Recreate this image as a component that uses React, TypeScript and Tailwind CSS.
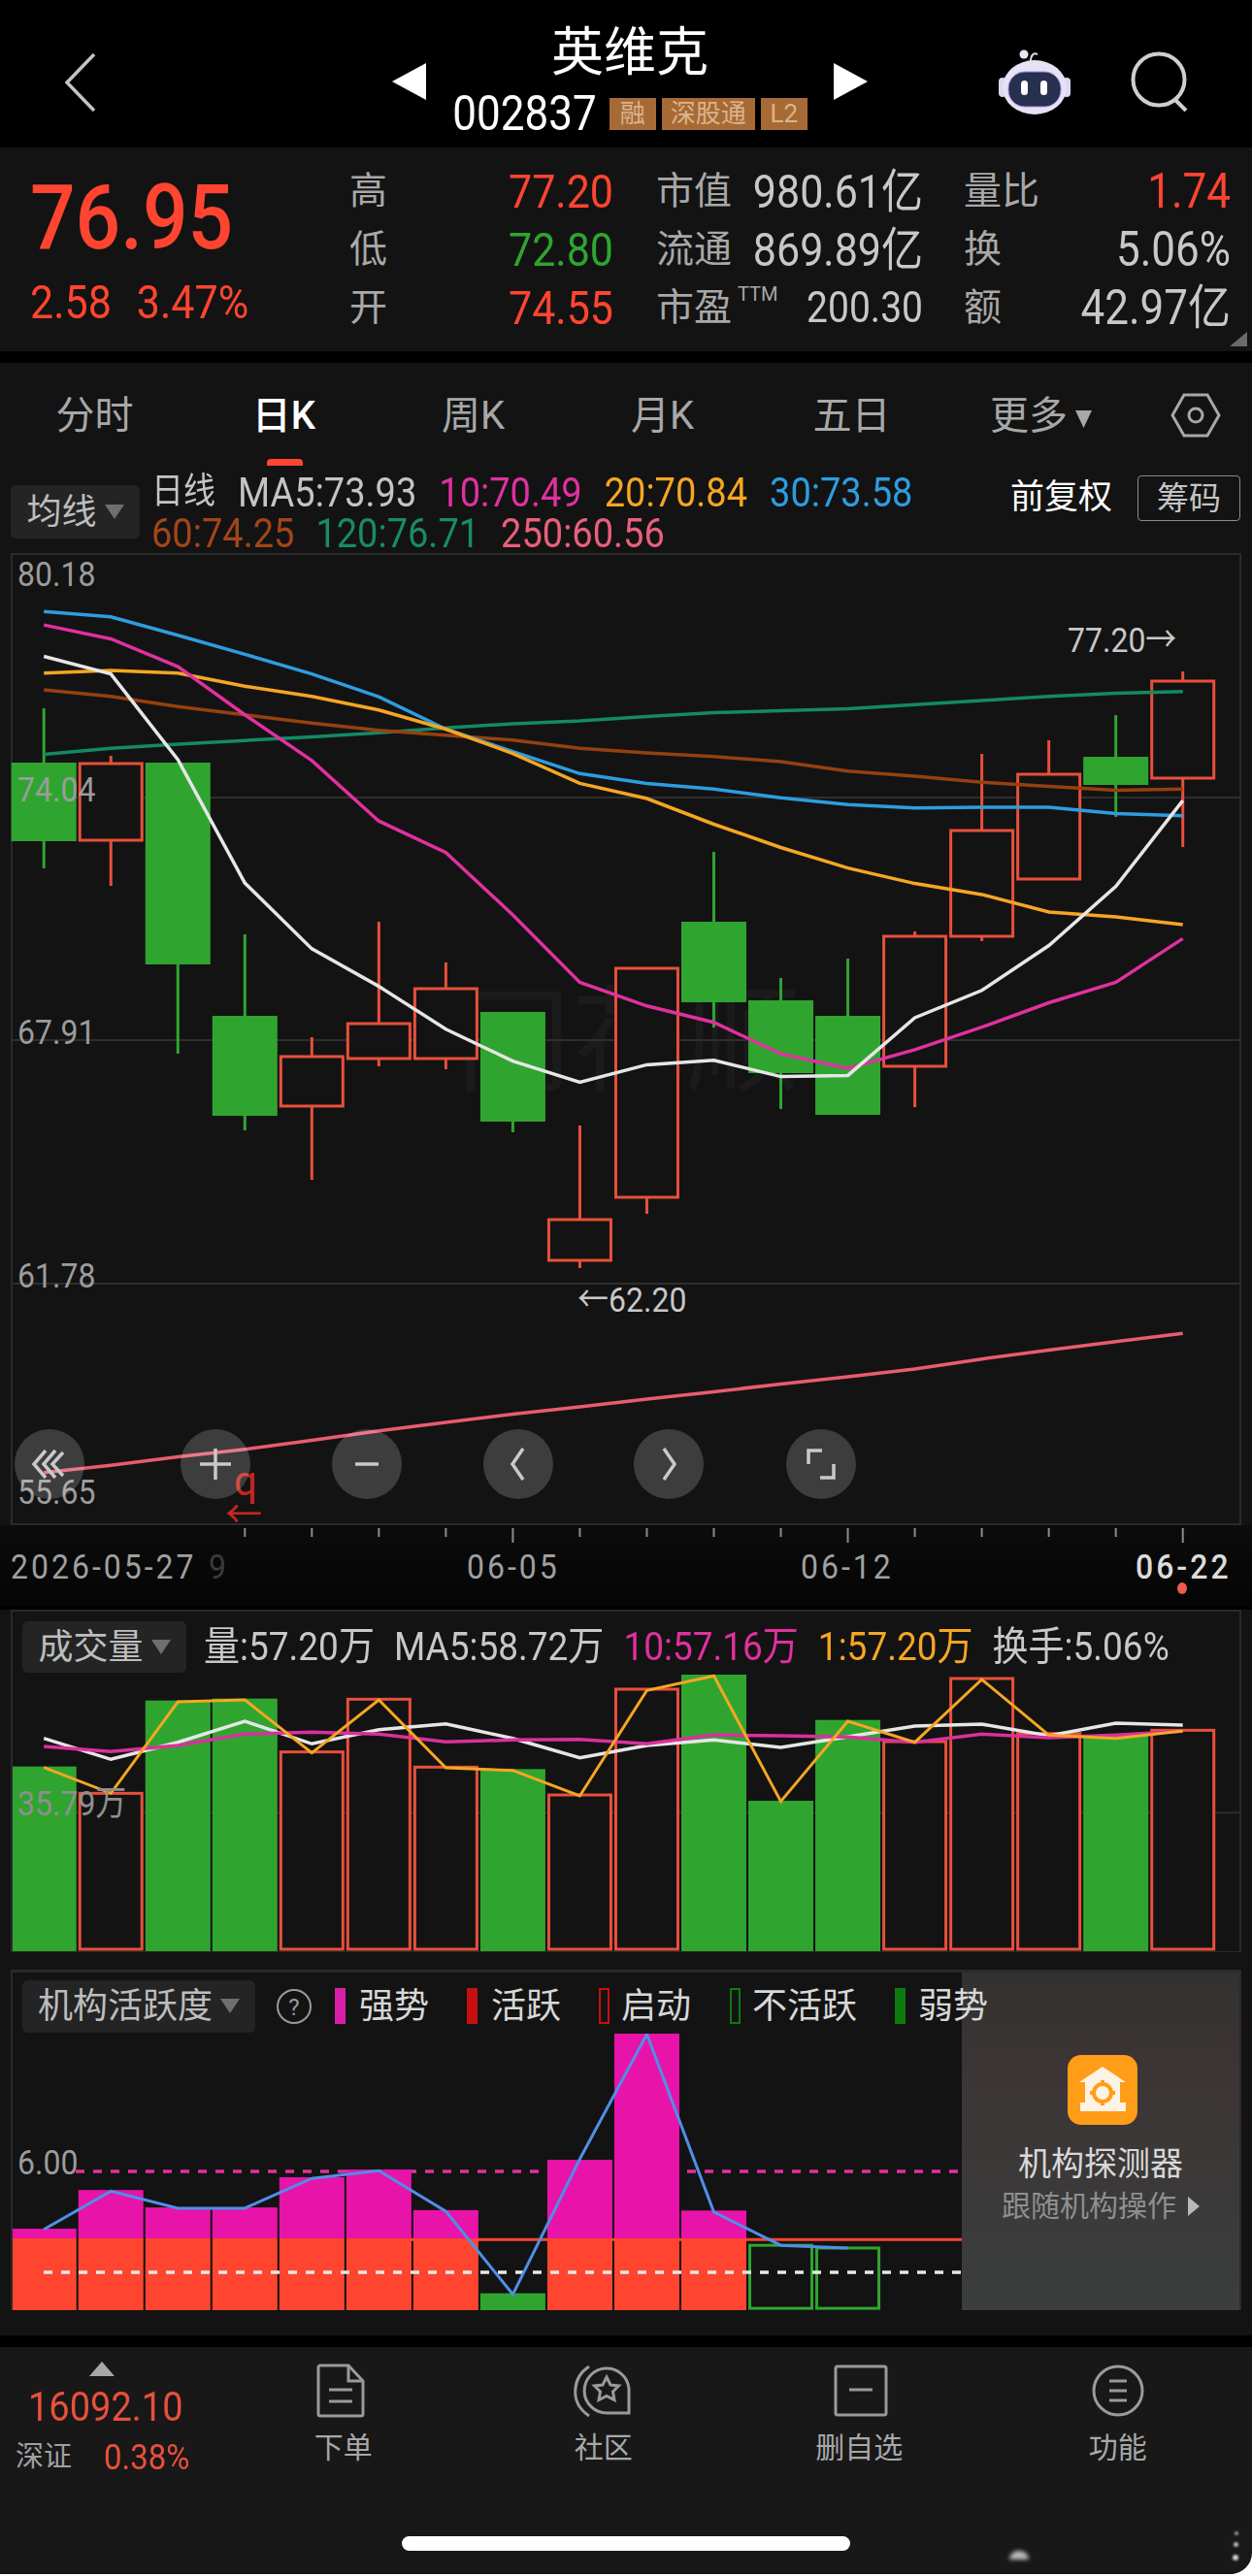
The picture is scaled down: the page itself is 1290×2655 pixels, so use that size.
import { ReactNode } from 'react';

const RED = '#e8503a';
const GREEN = '#2fa530';

// candle centre x, all chart numbers are in page pixels
const cx = (i: number) => 45.2 + i * 69.03;
const z2 = (y: number) => 480 + y / 2.376;
const z3 = (y: number) => 1140 + y / 2.904;
const z4 = (y: number) => 1650 + y / 3;
const z5 = (y: number) => 2030 + y / 2.509;

const points = (ys: number[]) => ys.map((y, i) => `${cx(i).toFixed(1)},${y.toFixed(1)}`).join(' ');

// [up, wickTop, bodyTop, bodyBottom, wickBottom]
const candles: [boolean, number, number, number, number][] = [
  [false, 730, 786, 867, 895],
  [true, 779, 787, 866, 913],
  [false, 786, 786, 994, 1086],
  [false, 963, 1047, 1150, 1165],
  [true, 1069, 1089, 1140, 1216],
  [true, 950, 1055, 1091, 1099],
  [true, 992, 1019, 1091, 1102],
  [false, 1043, 1043, 1156, 1167],
  [true, 1160, 1257, 1299, 1307],
  [true, 998, 998, 1234, 1251],
  [false, 878, 950, 1033, 1059],
  [false, 1008, 1031, 1106, 1143],
  [false, 988, 1047, 1149, 1149],
  [true, 960, 965, 1099, 1141],
  [true, 777, 856, 965, 970],
  [true, 763, 798, 906, 906],
  [false, 737, 780, 809, 842],
  [true, 692, 702, 802, 873],
];

const maLines = [
  { color: '#e85c70', ys: [1097, 1075, 1050, 1027, 1000, 972, 947, 922, 900, 877, 855, 832, 810, 787, 757, 730, 705, 680].map(z3) },
  { color: '#138a64', ys: [707, 692, 682, 673, 664, 654, 642, 632, 625, 614, 605, 600, 595, 585, 575, 565, 557, 553].map(z2) },
  { color: '#96400f', ys: [549, 565, 590, 610, 630, 648, 660, 672, 692, 703, 712, 725, 748, 760, 775, 785, 795, 792].map(z2) },
  { color: '#2e9de0', ys: [357, 370, 415, 462, 510, 566, 645, 700, 754, 778, 792, 813, 830, 838, 836, 836, 852, 857].map(z2) },
  { color: '#f5a623', ys: [508, 501, 508, 540, 565, 598, 645, 705, 778, 815, 878, 935, 985, 1023, 1050, 1093, 1105, 1124].map(z2) },
  { color: '#e0319f', ys: [390, 424, 492, 610, 722, 870, 947, 1100, 1265, 1323, 1363, 1440, 1476, 1430, 1375, 1315, 1265, 1158].map(z2) },
  { color: '#e6e6e6', ys: [467, 510, 720, 1022, 1183, 1275, 1380, 1458, 1510, 1467, 1456, 1496, 1493, 1352, 1285, 1175, 1030, 820].map(z2) },
];

const volumes: [boolean, number][] = [
  [false, 512], [true, 595], [false, 308], [false, 302], [true, 467], [true, 304], [true, 514], [false, 520], [true, 600],
  [true, 273], [false, 228], [false, 618], [false, 368], [true, 435], [true, 240], [true, 410], [false, 415], [true, 400],
];
const volWhite = [425, 490, 437, 372, 442, 398, 380, 425, 485, 447, 430, 453, 420, 387, 381, 417, 378, 384].map(z4);
const volPink = [450, 466, 447, 412, 406, 412, 436, 430, 428, 442, 414, 417, 421, 437, 412, 423, 415, 403].map(z4);
const volOrange = [515, 595, 312, 306, 470, 306, 516, 524, 603, 277, 232, 620, 372, 437, 243, 415, 425, 402].map(z4);

const activity = [675, 575, 620, 620, 542, 522, 627, 0, 497, 170, 628];
const activityLine = [677, 578, 622, 622, 545, 525, 630, 845, 495, 172, 632, 718, 725].map(z5);

const tall = 'inline-block scale-y-[1.12]';

function Stat({ label, value, color }: { label: ReactNode; value: string; color: string }) {
  return (
    <div className="flex h-[60px] items-center justify-between">
      <span className="text-[39px] text-[#a8a8a8]">{label}</span>
      <span className={`${tall} ${color}`}>{value}</span>
    </div>
  );
}

function Label({ x, y, children, fill = '#9c9c9c', anchor = 'start', size = 'text-[32px]' }: { x: number; y: number; children: ReactNode; fill?: string; anchor?: 'start' | 'middle' | 'end'; size?: string }) {
  return (
    <text transform={`translate(${x} ${y}) scale(1 1.12)`} fill={fill} textAnchor={anchor} className={size}>
      {children}
    </text>
  );
}

function RoundButton({ className, children }: { className: string; children: ReactNode }) {
  return (
    <div className={`flex size-[72px] items-center justify-center rounded-full bg-white/[0.18] ${className}`}>
      <svg width="44" height="44" viewBox="0 0 44 44" fill="none" stroke="#c9c9c9" strokeWidth="3.5">
        {children}
      </svg>
    </div>
  );
}

function Dropdown({ label, className }: { label: string; className: string }) {
  return (
    <div className={`flex items-center justify-center gap-[8px] rounded-[6px] bg-[#242424] ${className}`}>
      <span className="text-[36px] text-[#bdbdbd]">{label}</span>
      <svg width="20" height="15" viewBox="0 0 20 15"><path d="M0 0h20L10 15z" fill="#6f6f6f" /></svg>
    </div>
  );
}

function NavItem({ label, icon, className }: { label: string; icon: ReactNode; className: string }) {
  return (
    <div className={`flex flex-col items-center pt-[2px] ${className}`}>
      <div className="flex h-[56px] items-center">{icon}</div>
      <span className="mt-[11px] text-[30px] leading-[40px] text-[#a8a8a8]">{label}</span>
    </div>
  );
}

function LegendMark({ className }: { className: string }) {
  return <span className={`h-[37px] w-[11px] ${className}`} />;
}

export default function App() {
  return (
    <div className="relative h-[2655px] w-[1290px] overflow-hidden bg-white [font-family:Roboto,'Noto_Sans_CJK_SC',sans-serif]">
      {/* Title bar */}
      <div className="flex h-[152px] items-start bg-black pl-[66px]">
        <svg className="mt-[55px]" width="33" height="60" viewBox="0 0 33 60" fill="none" stroke="#c4c4c4" strokeWidth="3.5">
          <path d="M31 1 3 30l28 29" />
        </svg>
        <div className="ml-[305px] flex w-[490px] items-center justify-between pt-[29px]">
          <svg className="mt-[4px]" width="35" height="38" viewBox="0 0 35 38"><path d="M35 0v38L0 19z" fill="#fff" /></svg>
          <div className="flex flex-col items-center">
            <span className="text-[54px] leading-[52px] text-white">英维克</span>
            <div className="mt-[19px] flex items-center">
              <span className={`${tall} text-[44px] leading-[34px] text-white`}>002837</span>
              <span className="ml-[13px] flex h-[33px] w-[48px] items-center justify-center bg-[#a86a35] text-[26px] text-[#d9b48e]">融</span>
              <span className="ml-[6px] flex h-[33px] w-[96px] items-center justify-center bg-[#a86a35] text-[26px] text-[#d9b48e]">深股通</span>
              <span className="ml-[6px] flex h-[33px] w-[48px] items-center justify-center bg-[#a86a35] text-[26px] text-[#d9b48e]">L2</span>
            </div>
          </div>
          <svg className="mt-[4px]" width="35" height="38" viewBox="0 0 35 38"><path d="M0 0v38l35-19z" fill="#fff" /></svg>
        </div>
        <svg className="ml-[135px] mt-[50px]" width="74" height="70" viewBox="0 0 74 70">
          <path d="M27 13c0-6 3-9 7-7" stroke="#ddd" strokeWidth="2" fill="none" transform="translate(6 0)" />
          <circle cx="26" cy="6" r="4.5" fill="#e8e6f4" />
          <rect x="0" y="30" width="8" height="20" rx="4" fill="#dcd8ef" />
          <rect x="66" y="30" width="8" height="20" rx="4" fill="#dcd8ef" />
          <ellipse cx="37" cy="40" rx="33" ry="28" fill="#e6e2f5" />
          <rect x="10" y="24" width="54" height="36" rx="17" fill="#27304f" stroke="#a98be0" strokeWidth="1" />
          <rect x="23" y="33" width="7" height="15" rx="3.5" fill="#fff" />
          <rect x="43" y="33" width="7" height="15" rx="3.5" fill="#fff" />
        </svg>
        <svg className="ml-[62px] mt-[53px]" width="62" height="62" viewBox="0 0 62 62" fill="none" stroke="#cfcfcf" strokeWidth="4">
          <circle cx="29" cy="29" r="26.5" />
          <path d="m46 50 11 11" />
        </svg>
      </div>

      {/* Quote panel */}
      <div className="relative flex h-[210px] bg-[#131313] pl-[31px] pt-[15px]">
        <div className="flex w-[329px] shrink-0 flex-col">
          <span className={`${tall} mt-[14px] origin-left text-[82px] font-medium leading-[88px] text-[#ff4530]`}>76.95</span>
          <div className={`${tall} mt-[19px] origin-left text-[43px] leading-[46px] text-[#ff4530]`}>
            <span>2.58</span>
            <span className="ml-[26px]">3.47%</span>
          </div>
        </div>
        <div className="w-[272px] shrink-0">
          <Stat label="高" value="77.20" color="text-[43px] text-[#ff4530]" />
          <Stat label="低" value="72.80" color="text-[43px] text-[#2fa530]" />
          <Stat label="开" value="74.55" color="text-[43px] text-[#ff4530]" />
        </div>
        <div className="ml-[44px] w-[275px] shrink-0">
          <Stat label="市值" value="980.61亿" color="text-[43px] text-[#c8c8c8]" />
          <Stat label="流通" value="869.89亿" color="text-[43px] text-[#c8c8c8]" />
          <Stat
            label={
              <span className="flex items-start">
                市盈<span className="ml-[6px] mt-[3px] text-[20px] leading-[24px]">TTM</span>
              </span>
            }
            value="200.30"
            color="text-[39px] text-[#c8c8c8]"
          />
        </div>
        <div className="ml-[42px] w-[275px] shrink-0">
          <Stat label="量比" value="1.74" color="text-[44px] text-[#ff4530]" />
          <Stat label="换" value="5.06%" color="text-[44px] text-[#c8c8c8]" />
          <Stat label="额" value="42.97亿" color="text-[44px] text-[#c8c8c8]" />
        </div>
        <svg className="absolute bottom-[5px] right-[5px]" width="18" height="15" viewBox="0 0 18 15"><path d="M18 0v15H0z" fill="#6b6b6b" /></svg>
      </div>
      <div className="h-[12px] bg-black" />

      {/* Period tabs */}
      <div className="flex h-[108px] bg-[#131313]">
        {['分时', '日K', '周K', '月K', '五日'].map((tab) => (
          <div key={tab} className={`relative flex h-full w-[195px] items-start justify-center pt-[30px] text-[40px] leading-[50px] ${tab === '日K' ? 'font-medium text-white' : 'text-[#a8a8a8]'}`}>
            {tab}
            {tab === '日K' && <span className="absolute bottom-[2px] left-[80px] h-[7px] w-[37px] rounded-t-[4px] bg-[#ff4530]" />}
          </div>
        ))}
        <div className="flex h-full w-[195px] items-start justify-center gap-[8px] pt-[30px] text-[40px] leading-[50px] text-[#a8a8a8]">
          更多
          <svg className="mt-[18px]" width="17" height="20" viewBox="0 0 19 22"><path d="M0 1h19L9.500 21z" fill="#a8a8a8" /></svg>
        </div>
        <svg className="ml-[36px] mt-[31px]" width="52" height="46" viewBox="0 0 52 46" fill="none" stroke="#a8a8a8" strokeWidth="3">
          <path d="M14 2h24l12 21-12 21H14L2 23z" />
          <circle cx="26" cy="23" r="7" />
        </svg>
      </div>

      {/* Kline area */}
      <div className="bg-[#131313]">
        <div className="flex h-[88px] pl-[11px]">
          <Dropdown label="均线" className="mt-[18px] h-[55px] w-[133px]" />
          <div className="ml-[12px] flex flex-col text-[38px] leading-[42px]">
            <div className="mt-[4px] flex gap-[23px]">
              <span className={`${tall} text-[#c4c4c4] text-[33px]`}>日线</span>
              <span className={`${tall} text-[#c4c4c4]`}>MA5:73.93</span>
              <span className={`${tall} text-[#e0319f]`}>10:70.49</span>
              <span className={`${tall} text-[#f5a623]`}>20:70.84</span>
              <span className={`${tall} text-[#2e9de0]`}>30:73.58</span>
            </div>
            <div className="flex gap-[22px]">
              <span className={`${tall} text-[#a2451a]`}>60:74.25</span>
              <span className={`${tall} text-[#1a8a68]`}>120:76.71</span>
              <span className={`${tall} text-[#e8607a]`}>250:60.56</span>
            </div>
          </div>
          <span className="ml-auto mt-[10px] text-[35px] leading-[42px] text-white">前复权</span>
          <span className="ml-[26px] mr-[12px] mt-[8px] flex h-[47px] w-[106px] items-center justify-center rounded-[4px] border border-[#8a8a8a] text-[33px] text-[#c4c4c4]">筹码</span>
        </div>

        <div className="relative mx-[11px] h-[1002px] border-2 border-[#2a2a2a]">
          <svg className="block overflow-visible" width="1264" height="998" viewBox="13 572 1264 998">
            <text x="470" y="1115" fill="#1b1b1b" className="text-[118px]">同花顺</text>
            {[822, 1072, 1323].map((y) => (
              <line key={y} x1="13" x2="1277" y1={y} y2={y} stroke="#2e2e2e" strokeWidth="2" />
            ))}
            {candles.map(([up, wt, bt, bb, wb], i) => (
              <g key={i}>
                <line x1={cx(i)} x2={cx(i)} y1={wt} y2={wb} stroke={up ? RED : GREEN} strokeWidth="3" />
                {up ? (
                  <rect x={cx(i) - 32} y={bt} width="64" height={bb - bt} fill="#131313" stroke={RED} strokeWidth="3" />
                ) : (
                  <rect x={cx(i) - 33.5} y={bt} width="67" height={bb - bt} fill={GREEN} />
                )}
              </g>
            ))}
            {maLines.map((l) => (
              <polyline key={l.color} points={points(l.ys)} fill="none" stroke={l.color} strokeWidth="3.5" />
            ))}
            <Label x={18} y={604}>80.18</Label>
            <Label x={18} y={826}>74.04</Label>
            <Label x={18} y={1076}>67.91</Label>
            <Label x={18} y={1327}>61.78</Label>
            <Label x={18} y={1550}>55.65</Label>
            <Label x={1100} y={672} fill="#c8c8c8">77.20→</Label>
            <Label x={595} y={1352} fill="#c8c8c8">←62.20</Label>
            <text x="241" y="1541" fill="#c8261f" className="text-[42px]">q</text>
            <text x="232" y="1574" fill="#c8261f" className="text-[38px]">←</text>
          </svg>
          <div className="absolute left-[2px] top-[901px] flex">
            <RoundButton className="">
              <path d="M18 8 6 22l12 14M28 8 16 22l12 14M36 10 25 22l11 12" />
            </RoundButton>
            <RoundButton className="ml-[99px]">
              <path d="M22 6v32M6 22h32" />
            </RoundButton>
            <RoundButton className="ml-[84px]">
              <path d="M10 22h24" />
            </RoundButton>
            <RoundButton className="ml-[84px]">
              <path d="M27 6 16 22l11 16" />
            </RoundButton>
            <RoundButton className="ml-[83px]">
              <path d="m17 6 11 16-11 16" />
            </RoundButton>
            <RoundButton className="ml-[85px]">
              <path d="M9 22V8h14M35 22v14H21" />
            </RoundButton>
          </div>
        </div>

        {/* Date axis */}
        <div className="bg-linear-to-b from-[#0c0c0c] to-[#050505]">
          <svg className="block" width="1290" height="84" viewBox="0 1572 1290 84">
            {Array.from({ length: 15 }, (_, k) => k + 3).map((i) => (
              <line key={i} x1={cx(i)} x2={cx(i)} y1="1575" y2={i === 7 || i === 12 || i === 17 ? 1590 : 1584} stroke="#8c8c8c" strokeWidth="2" />
            ))}
            <g className="tracking-[3px]">
              <Label x={11} y={1627} fill="#a0a0a0">2026-05-27</Label>
              <Label x={215} y={1627} fill="#3a3a3a">9</Label>
              <Label x={481} y={1627} fill="#a0a0a0">06-05</Label>
              <Label x={825} y={1627} fill="#a0a0a0">06-12</Label>
              <g className="font-medium">
                <Label x={1170} y={1627} fill="#dcdcdc">06-22</Label>
              </g>
            </g>
            <ellipse cx="1218" cy="1637" rx="5" ry="6" fill="#f25a50" />
          </svg>
        </div>
        <div className="h-[3px] bg-black" />
      </div>

      {/* Volume */}
      <div className="bg-[#131313] pb-[18px] pt-0">
        <div className="mx-[11px] h-[353px] border-2 border-b border-[#2a2a2a]">
          <div className="flex h-[64px] items-start pl-[10px] pt-[10px]">
            <Dropdown label="成交量" className="h-[53px] w-[169px]" />
            <div className="ml-[18px] flex h-[53px] items-center gap-[20px] text-[37px]">
              <span className={`${tall} text-[#c8c8c8]`}>量:57.20万</span>
              <span className={`${tall} text-[#c8c8c8]`}>MA5:58.72万</span>
              <span className={`${tall} text-[#e0319f]`}>10:57.16万</span>
              <span className={`${tall} text-[#f5a623]`}>1:57.20万</span>
              <span className={`${tall} text-[#c8c8c8]`}>换手:5.06%</span>
            </div>
          </div>
          <svg className="block" width="1264" height="286" viewBox="13 1725 1264 286">
            <line x1="13" x2="1277" y1={z4(655)} y2={z4(655)} stroke="#2e2e2e" strokeWidth="2" />
            {volumes.map(([up, top], i) =>
              up ? (
                <rect key={i} x={cx(i) - 32} y={z4(top)} width="64" height={2009 - z4(top)} fill="#131313" stroke={RED} strokeWidth="3" />
              ) : (
                <rect key={i} x={cx(i) - 33.5} y={z4(top)} width="67" height={2011 - z4(top)} fill={GREEN} />
              )
            )}
            <polyline points={points(volWhite)} fill="none" stroke="#e6e6e6" strokeWidth="3.5" />
            <polyline points={points(volPink)} fill="none" stroke="#d9309c" strokeWidth="3.5" />
            <polyline points={points(volOrange)} fill="none" stroke="#f5a623" strokeWidth="3" />
            <Label x={18} y={1871} fill="#8f8f8f">35.79万</Label>
          </svg>
        </div>
      </div>

      {/* Institution activity */}
      <div className="h-[377px] bg-[#131313]">
        <div className="relative mx-[11px] h-[351px] border-x-2 border-t-[3px] border-[#2a2a2a]">
          <div className="absolute bottom-0 right-0 top-0 flex w-[286px] flex-col items-center bg-linear-to-b from-[#333130] via-[#3c3535] via-30% to-[#3a3e3d] pt-[85px]">
            <div className="ml-[4px] flex size-[72px] items-center justify-center rounded-[14px] bg-[#ff9c18]">
              <svg width="50" height="48" viewBox="0 0 50 48">
                <path d="M25 0 49 16H43V37H49V46H2V37H7V16H1z" fill="#fdf3e4" />
                <circle cx="25" cy="27" r="9" fill="none" stroke="#ff9c18" strokeWidth="4" />
                <path d="M25 14v5M25 35v5M12 27h5M33 27h5" stroke="#ff9c18" strokeWidth="4" />
              </svg>
            </div>
            <span className="mt-[18px] text-[34px] leading-[44px] text-[#d8d8d8]">机构探测器</span>
            <span className="mt-[2px] flex items-center gap-[12px] text-[30px] leading-[40px] text-[#8e9090]">
              跟随机构操作
              <svg width="12" height="20" viewBox="0 0 12 20"><path d="M0 0v20l12-10z" fill="#b8b8b8" /></svg>
            </span>
          </div>
          <div className="relative flex h-[63px] items-center pl-[10px] pt-[6px]">
            <Dropdown label="机构活跃度" className="h-[54px] w-[240px]" />
            <svg className="ml-[22px]" width="36" height="38" viewBox="0 0 36 38" fill="none" stroke="#9a9a9a" strokeWidth="2">
              <circle cx="18" cy="19" r="17" />
              <text x="18" y="28" textAnchor="middle" fill="#9a9a9a" stroke="none" className="text-[24px]">?</text>
            </svg>
            <div className="ml-[24px] flex items-center text-[36px] text-[#d8d8d8]">
              <LegendMark className="bg-[#d81ea8]" />
              <span className="ml-[14px]">强势</span>
              <LegendMark className="ml-[39px] bg-[#c80f0f]" />
              <span className="ml-[14px]">活跃</span>
              <LegendMark className="ml-[39px] border-2 border-[#c80f0f]" />
              <span className="ml-[12px]">启动</span>
              <LegendMark className="ml-[40px] border-2 border-[#0f7a0f]" />
              <span className="ml-[12px]">不活跃</span>
              <LegendMark className="ml-[39px] bg-[#0f7a0f]" />
              <span className="ml-[13px]">弱势</span>
            </div>
          </div>
          <svg className="block" width="978" height="285" viewBox="13 2098 978 285">
            <line x1={cx(8) - 210} x2="991" y1={z5(703)} y2={z5(703)} stroke="#ff4530" strokeWidth="3" />
            <line x1="78" x2="991" y1={z5(527)} y2={z5(527)} stroke="#e0319f" strokeWidth="3.5" strokeDasharray="9 9" />
            {activity.map((top, i) =>
              top ? (
                <g key={i}>
                  <rect x={cx(i) - 33.5} y={z5(top)} width="67" height={z5(700) - z5(top)} fill="#e813a8" />
                  <rect x={cx(i) - 33.5} y={z5(700)} width="67" height={2383 - z5(700)} fill="#ff4530" />
                </g>
              ) : (
                <rect key={i} x={cx(i) - 33.5} y={z5(842)} width="67" height={2383 - z5(842)} fill={GREEN} />
              )
            )}
            <rect x={cx(11) - 32} y={z5(718)} width="64" height={z5(881) - z5(718)} fill="none" stroke={GREEN} strokeWidth="3" />
            <rect x={cx(12) - 32} y={z5(725)} width="64" height={z5(881) - z5(725)} fill="none" stroke={GREEN} strokeWidth="3" />
            <line x1="45" x2="991" y1={z5(788)} y2={z5(788)} stroke="#e8e8e8" strokeWidth="3.5" strokeDasharray="9 9" />
            <polyline points={points(activityLine)} fill="none" stroke="#4f8fe8" strokeWidth="3" />
            <Label x={18} y={2243}>6.00</Label>
          </svg>
        </div>
      </div>
      <div className="h-[12px] bg-black" />

      {/* Bottom nav */}
      <div className="relative flex h-[234px] rounded-br-[22px] bg-[#181818] pt-[15px]">
        <div className="flex w-[221px] shrink-0 flex-col pl-[16px]">
          <svg className="ml-[76px]" width="26" height="15" viewBox="0 0 26 15"><path d="M13 0l13 15H0z" fill="#a8a8a8" /></svg>
          <span className={`${tall} ml-[13px] mt-[11px] text-[38px] leading-[40px] text-[#e8503a]`}>16092.10</span>
          <div className="mt-[8px] flex items-center">
            <span className="text-[29px] text-[#a0a0a0]">深证</span>
            <span className={`${tall} ml-[33px] text-[33px] text-[#e8503a]`}>0.38%</span>
          </div>
        </div>
        <NavItem
          className="w-[267px]"
          label="下单"
          icon={
            <svg className="mr-[6px]" width="50" height="56" viewBox="0 0 50 56" fill="none" stroke="#9a9a9a" strokeWidth="3">
              <path d="M33 2H4a2.500 2.500 0 0 0-2 2.500V52a2 2 0 0 0 2 2h42a2 2 0 0 0 2-2V18z" />
              <path d="M33 2v16h15M13 27h24M13 39h24" />
            </svg>
          }
        />
        <NavItem
          className="w-[272px]"
          label="社区"
          icon={
            <svg className="mr-[6px]" width="62" height="56" viewBox="0 0 62 56" fill="none" stroke="#9a9a9a" strokeWidth="3">
              <path d="M19 3C2 14-2 40 19 54" />
              <path d="M60 26a23 23 0 1 0-23 25h23z" />
              <path d="m37 14 4 8 8.500 1-6 6 1.500 8.500-8-4-8 4 1.500-8.500-6-6 8.500-1z" />
            </svg>
          }
        />
        <NavItem
          className="w-[258px]"
          label="删自选"
          icon={
            <svg className="ml-[4px]" width="56" height="54" viewBox="0 0 56 54" fill="none" stroke="#9a9a9a" strokeWidth="3">
              <rect x="2" y="2" width="52" height="50" rx="2" />
              <path d="M16 26h24" />
            </svg>
          }
        />
        <NavItem
          className="w-[278px]"
          label="功能"
          icon={
            <svg width="54" height="54" viewBox="0 0 54 54" fill="none" stroke="#9a9a9a" strokeWidth="3">
              <circle cx="27" cy="27" r="25" />
              <path d="M18 17h18M18 27h18M18 37h18" />
            </svg>
          }
        />
        <div className="absolute bottom-[24px] left-[414px] h-[15px] w-[462px] rounded-full bg-white" />
        <div className="absolute bottom-[15px] left-[1040px] h-[9px] w-[20px] rounded-t-full bg-white/70 blur-[2px]" />
        <div className="absolute bottom-[14px] right-[14px] h-[6px] w-[6px] rounded-full bg-white/80 blur-[1px]" />
        <div className="absolute bottom-[28px] right-[14px] h-[5px] w-[5px] rounded-full bg-white/70 blur-[1px]" />
        <div className="absolute bottom-[40px] right-[14px] h-[4px] w-[4px] rounded-full bg-white/60 blur-[1px]" />
      </div>
    </div>
  );
}
